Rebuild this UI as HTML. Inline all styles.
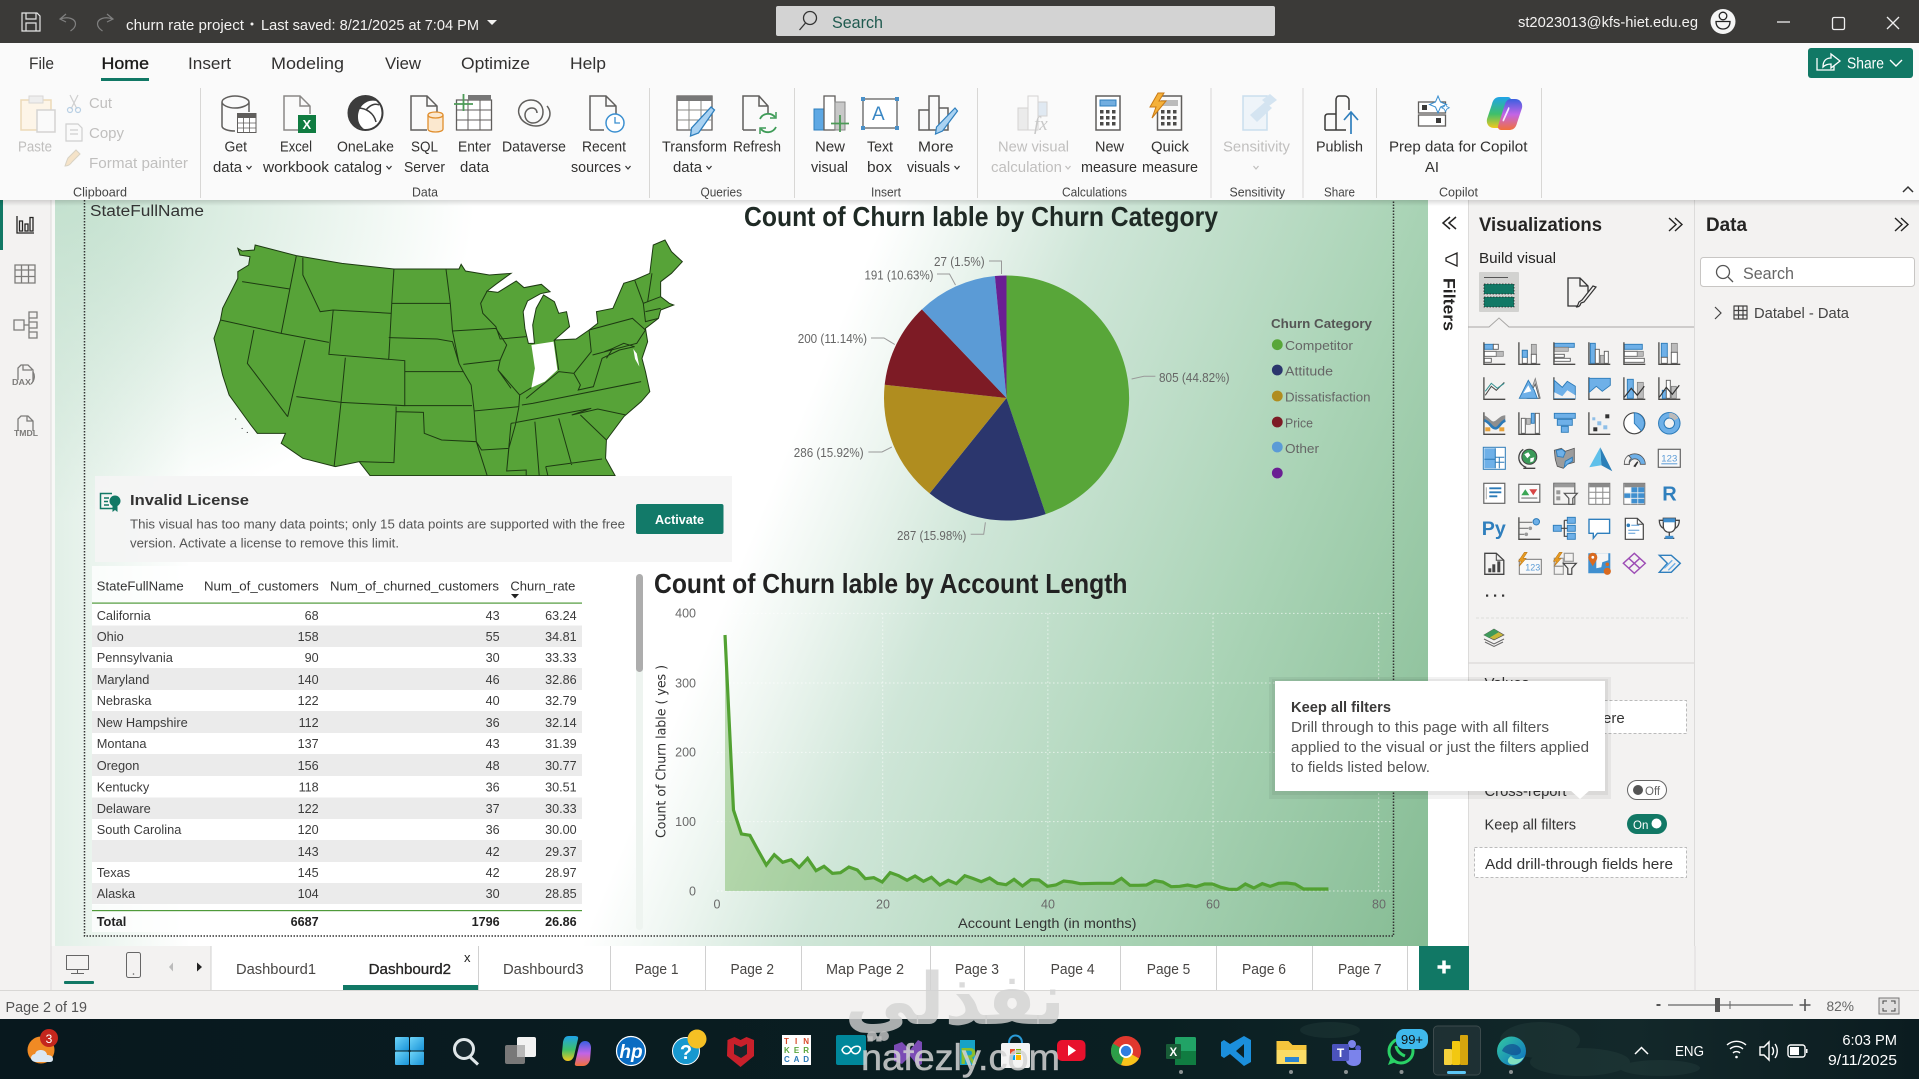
<!DOCTYPE html>
<html><head><meta charset="utf-8"><title>churn rate project</title>
<style>
html,body{margin:0;padding:0;width:1919px;height:1079px;overflow:hidden;background:#f3f2f1}
svg{display:block}
text{font-family:"Liberation Sans","DejaVu Sans",sans-serif;white-space:pre}
.r{font-size:14.5px;fill:#323130}
.d{font-size:14.5px;fill:#c0bfbe}
.gl{font-size:13px;fill:#444}
.tb{font-size:17px;fill:#323130}
.th{font-size:12.8px;fill:#333}
.c{font-size:12.8px;fill:#3c3c3c}
.n{font-size:12.6px;fill:#3c3c3c;text-anchor:end}
.nb{font-size:12.6px;fill:#222;text-anchor:end;font-weight:bold}
.pl{font-size:12.5px;fill:#666}
.ax{font-size:12.5px;fill:#6a6a6a}
.lg{font-size:13px;fill:#666}
.pg{font-size:14.5px;fill:#484644}
.k{fill:none;stroke:#4b4a48;stroke-width:1.3}
.b{fill:#6eb0e8;stroke:#2b7ab8;stroke-width:.9}
.g{fill:#bcbcbc;stroke:#7a7a7a;stroke-width:.7}
.w{fill:#fff;stroke:#5a5a5a;stroke-width:.9}
.s{fill:none;stroke:#605e5c;stroke-width:1.5}
.f{fill:none;stroke:#d4d3d2;stroke-width:1.5}
.st{fill:none;stroke:#1d3a12;stroke-width:1;vector-effect:non-scaling-stroke}
</style></head><body>
<svg width="1919" height="1079" viewBox="0 0 1919 1079" xmlns="http://www.w3.org/2000/svg">
<defs>
<linearGradient id="cv" gradientUnits="userSpaceOnUse" x1="870" y1="250" x2="1586" y2="547">
<stop offset="0" stop-color="#fff"/><stop offset=".1" stop-color="#eef6f1"/><stop offset=".26" stop-color="#cfe6d8"/><stop offset=".63" stop-color="#a9d3b5"/><stop offset="1" stop-color="#86bc94"/>
</linearGradient>
<radialGradient id="tl" gradientUnits="userSpaceOnUse" cx="55" cy="200" r="420" gradientTransform="translate(55 200) scale(1 .75) translate(-55 -200)">
<stop offset="0" stop-color="#b9dcc6" stop-opacity=".85"/><stop offset="1" stop-color="#b9dcc6" stop-opacity="0"/>
</radialGradient>
<linearGradient id="lf" gradientUnits="userSpaceOnUse" x1="55" y1="0" x2="190" y2="0">
<stop offset="0" stop-color="#c4e0cf" stop-opacity=".5"/><stop offset="1" stop-color="#c4e0cf" stop-opacity="0"/>
</linearGradient>
<linearGradient id="sh" x1="0" y1="0" x2="0" y2="1"><stop offset="0" stop-color="#000" stop-opacity=".14"/><stop offset="1" stop-color="#000" stop-opacity="0"/></linearGradient>
<linearGradient id="co1" x1="0" y1="0" x2="0" y2="1"><stop offset="0" stop-color="#1fa3e8"/><stop offset=".55" stop-color="#3fc06a"/><stop offset="1" stop-color="#f2c81e"/></linearGradient>
<linearGradient id="co2" x1="0" y1="0" x2="0" y2="1"><stop offset="0" stop-color="#3a5fe0"/><stop offset=".5" stop-color="#c364e6"/><stop offset="1" stop-color="#f2703a"/></linearGradient>
<linearGradient id="win" x1="0" y1="0" x2="1" y2="1"><stop offset="0" stop-color="#6ed4f8"/><stop offset="1" stop-color="#1893d8"/></linearGradient>
<linearGradient id="edge" x1="0" y1="0" x2="1" y2="1"><stop offset="0" stop-color="#33c9a0"/><stop offset="1" stop-color="#0d6dc4"/></linearGradient>
<linearGradient id="tbg" x1="0" y1="0" x2="1" y2="0"><stop offset="0" stop-color="#08181e"/><stop offset=".6" stop-color="#0a1f22"/><stop offset=".85" stop-color="#13282a"/><stop offset="1" stop-color="#0b1c20"/></linearGradient>
</defs>

<!-- base -->
<rect width="1919" height="1079" fill="#f3f2f1"/>

<!-- canvas -->
<rect x="55" y="200" width="1373" height="746" fill="url(#cv)"/>
<rect x="55" y="200" width="500" height="400" fill="url(#tl)"/>
<rect x="55" y="200" width="140" height="746" fill="url(#lf)"/>
<rect x="1428" y="200" width="41" height="746" fill="#fff"/>
<!-- left rail -->
<rect x="0" y="200" width="51" height="746" fill="#f3f2f1"/>
<rect x="51" y="200" width="4" height="746" fill="#f8f8f7"/>
<rect x="50.5" y="200" width="1" height="790" fill="#dcdbda"/>
<rect x="0" y="200" width="3" height="50" fill="#117865"/>
<g fill="none" stroke="#252423" stroke-width="1.3"><path d="M17 216v17h17"/><path d="M19.5 221h3v10h-3zM25 224h3v7h-3zM30 217.5h3v13.5h-3z"/></g>
<g fill="none" stroke="#7d7c7a" stroke-width="1.3"><path d="M15 265h20v18H15zM15 270h20M15 276.5h20M21.5 265v18M28.5 265v18"/>
<path d="M14 320h10v10H14zM24 325h5M29 315v20M29 312h8v6h-8zM29 322h8v6h-8zM29 332h8v6h-8z"/>
<path d="M18 380v-12l3-3h7l5 5v12M23 365v5h9"/><path d="M33 372c2 3 2 8-2 12"/>
<path d="M18 431v-12l3-3h7l5 5v10M27 416v5h6"/></g>
<text x="12" y="385" font-size="8.5" fill="#7d7c7a" font-weight="bold" textLength="19" lengthAdjust="spacingAndGlyphs">DAX</text>
<text x="14" y="436" font-size="8.5" fill="#7d7c7a" font-weight="bold" textLength="24" lengthAdjust="spacingAndGlyphs">TMDL</text>

<!-- frame -->
<path d="M84.5 200V936H1393.5V200" fill="none" stroke="#333" stroke-width="1.5" stroke-dasharray="1.5 1.5"/>

<!-- Map -->
<text x="90" y="216" font-size="15.5" fill="#333" textLength="114" lengthAdjust="spacingAndGlyphs">StateFullName</text>
<svg x="60" y="195" width="680" height="380" viewBox="0 0 1568 1140" preserveAspectRatio="none">
<path class="st" style="fill:#57a338" d="M410 160L420 168L448 165L450 150L545 182L650 205L770 222L920 222L925 208L935 228L990 240L1040 235L1005 268L985 288L1010 292L1052 258L1070 278L1110 268L1130 290L1108 296L1078 318L1068 350L1072 400L1080 445L1094 445L1090 390L1098 340L1115 300L1140 320L1150 355L1168 350L1175 395L1140 435L1190 432L1220 405L1240 385L1237 350L1275 340L1300 265L1325 255L1360 235L1368 150L1395 135L1410 170L1435 200L1410 235L1385 260L1385 305L1405 325L1415 330L1385 345L1380 370L1350 400L1355 440L1342 490L1350 530L1360 590L1340 620L1300 665L1260 735L1258 790L1280 842L715 842L690 800L635 815L560 790L510 745L520 715L455 715L440 690L390 600L375 540L355 430L370 375L375 340L410 250L410 230L435 210L438 185L415 180Z"/>
<path fill="#fff" d="M1087 450L1138 440L1147 525L1118 560L1087 578L1095 520Z"/>
<path fill="#fff" d="M1322 462L1330 476L1336 515L1326 492Z"/>
<path class="st" d="M420 260L530 282M545 182L530 282L510 415M560 188L560 240L600 350L630 345M370 375L510 415L620 442M447 405L432 505L525 665M565 435L525 665M630 345L620 478L758 493M658 488L648 622L545 605M630 345L765 355M770 222L765 325L758 493L795 497L795 632L648 622M758 428L870 432L905 440L920 505L930 530L795 530M765 325L900 325M890 222L900 325L905 408L920 505M905 408L1005 400M985 288L970 325L975 355L1005 395L1015 432L1075 425M1005 400L1030 450L1015 495L930 508M1015 495L1010 525L1060 600L1058 635L955 648L948 570L930 530M795 632L950 632M775 650L838 652L840 715L880 735L960 740L955 648M775 650L770 803L690 800M648 622L632 815M775 635L775 650M1058 637L1050 690L1035 760L972 765L960 740L985 842M1035 760L1030 828L1075 825L1075 842M1040 685L1225 640L1180 660L1240 642L1305 660M1065 630L1090 625L1340 560M1075 610L1150 530L1185 535L1225 470L1220 405M1140 435L1150 525M1087 578L1060 600M1185 535L1200 570L1195 585L1230 575L1250 490L1290 465L1325 455M1220 405L1320 370L1350 405L1330 445L1228 480M1095 680L1105 842M1150 670L1180 810M1120 815L1250 792M1120 815L1125 842M1200 660L1260 735M1325 255L1345 325L1385 305M1365 235L1355 320M1345 325L1350 380L1380 370M1350 350L1385 340M1275 460L1300 445L1325 455M1255 470L1275 460L1260 490M1040 685L1030 828M1010 525L1040 580"/>
<g fill="#222"><circle cx="405" cy="672" r="1.5"/><circle cx="420" cy="700" r="1.5"/><circle cx="432" cy="712" r="1.5"/></g>
<path fill="#ebebe8" d="M410 843L470 860L500 960L480 1000L440 960Z M730 843L1280 843L1310 940L1285 1000L1240 930L1000 930L900 1060L780 950Z" opacity=".45"/>
</svg>
<!-- license -->
<rect x="95" y="476" width="637" height="86" fill="#f4f4f4" fill-opacity=".92"/>
<g fill="none" stroke="#117865" stroke-width="1.5"><path d="M112 493.5H100.500v15H113"/><path d="M104 498h5M104 501.5h4M104 505h5"/></g>
<circle cx="115" cy="501" r="5.5" fill="#117865"/><path d="M112.5 506v6l2.5-2 2.5 2v-6z" fill="#117865"/>
<text x="130" y="505" font-size="15" font-weight="bold" fill="#333" textLength="119" lengthAdjust="spacingAndGlyphs">Invalid License</text>
<text x="130" y="528.5" font-size="13" fill="#555" textLength="495" lengthAdjust="spacingAndGlyphs">This visual has too many data points; only 15 data points are supported with the free</text>
<text x="130" y="547.5" font-size="13" fill="#555" textLength="269" lengthAdjust="spacingAndGlyphs">version. Activate a license to remove this limit.</text>
<rect x="636" y="504" width="87.5" height="30" rx="2" fill="#127a69"/>
<text x="655" y="524" font-size="13" font-weight="bold" fill="#fff" textLength="49" lengthAdjust="spacingAndGlyphs">Activate</text>

<!-- Pie chart -->
<text x="744" y="226" font-size="28" font-weight="bold" fill="#1f2a25" textLength="474" lengthAdjust="spacingAndGlyphs">Count of Churn lable by Churn Category</text>
<path d="M1006.5 398V275.5A122.5 122.5 0 0 1 1045.7 514.1Z" fill="#58a639"/>
<path d="M1006.5 398L1045.7 514.1A122.5 122.5 0 0 1 929.6 493.4Z" fill="#2b366d"/>
<path d="M1006.5 398L929.6 493.4A122.5 122.5 0 0 1 884.7 384.8Z" fill="#b08d1f"/>
<path d="M1006.5 398L884.7 384.8A122.5 122.5 0 0 1 921.9 309.4Z" fill="#7d1b25"/>
<path d="M1006.5 398L921.9 309.4A122.5 122.5 0 0 1 994.9 276Z" fill="#5b9bd6"/>
<path d="M1006.5 398L994.9 276A122.5 122.5 0 0 1 1006.5 275.5Z" fill="#6a1f93"/>
<g fill="none" stroke="#999" stroke-width="1"><path d="M989 261h12.5v13M937 274h12.5l6 11M871 338h13l10.8 6.5M868.4 452h13.6l9.8-5M970.7 534.3h13l1.7-12M1131.6 379l12.4-2.7h11.4"/></g>
<text class="pl" x="934" y="266" textLength="50.6" lengthAdjust="spacingAndGlyphs">27 (1.5%)</text>
<text class="pl" x="864.5" y="279.5" textLength="69" lengthAdjust="spacingAndGlyphs">191 (10.63%)</text>
<text class="pl" x="797.7" y="343" textLength="69.3" lengthAdjust="spacingAndGlyphs">200 (11.14%)</text>
<text class="pl" x="793.8" y="457" textLength="69.8" lengthAdjust="spacingAndGlyphs">286 (15.92%)</text>
<text class="pl" x="897" y="540" textLength="69.4" lengthAdjust="spacingAndGlyphs">287 (15.98%)</text>
<text class="pl" x="1159" y="382" textLength="70.6" lengthAdjust="spacingAndGlyphs">805 (44.82%)</text>
<text x="1271" y="328" font-size="13" font-weight="bold" fill="#555" textLength="101" lengthAdjust="spacingAndGlyphs">Churn Category</text>
<circle cx="1277.3" cy="344.7" r="5.4" fill="#58a639"/><circle cx="1277.3" cy="370" r="5.4" fill="#2b366d"/><circle cx="1277.3" cy="396" r="5.4" fill="#b08d1f"/><circle cx="1277.3" cy="422" r="5.4" fill="#7d1b25"/><circle cx="1277.3" cy="447" r="5.4" fill="#5b9bd6"/><circle cx="1277.3" cy="473" r="5.4" fill="#6a1f93"/>
<text class="lg" x="1285" y="350" textLength="68" lengthAdjust="spacingAndGlyphs">Competitor</text>
<text class="lg" x="1285" y="375.5" textLength="48" lengthAdjust="spacingAndGlyphs">Attitude</text>
<text class="lg" x="1285" y="401.5" textLength="85.5" lengthAdjust="spacingAndGlyphs">Dissatisfaction</text>
<text class="lg" x="1285" y="427.5" textLength="28" lengthAdjust="spacingAndGlyphs">Price</text>
<text class="lg" x="1285" y="453" textLength="34" lengthAdjust="spacingAndGlyphs">Other</text>

<!-- Table -->
<rect x="92" y="566" width="490" height="366" fill="#fff" fill-opacity=".75"/>
<rect x="92" y="603.5" width="490" height="301" fill="#fff"/>
<g fill="#ebebeb"><rect x="92" y="625.5" width="490" height="21.5"/><rect x="92" y="668" width="490" height="22"/><rect x="92" y="711" width="490" height="22"/><rect x="92" y="754" width="490" height="22"/><rect x="92" y="797.5" width="490" height="21.5"/><rect x="92" y="840" width="490" height="22"/><rect x="92" y="883" width="490" height="21"/></g>
<text class="th" x="96.7" y="590.5" textLength="87" lengthAdjust="spacingAndGlyphs">StateFullName</text>
<text class="th" x="204" y="590.5" textLength="114.7" lengthAdjust="spacingAndGlyphs">Num_of_customers</text>
<text class="th" x="330" y="590.5" textLength="169" lengthAdjust="spacingAndGlyphs">Num_of_churned_customers</text>
<text class="th" x="510.4" y="590.5" textLength="65" lengthAdjust="spacingAndGlyphs">Churn_rate</text>
<path d="M511 594h8l-4 4.5z" fill="#222"/>
<rect x="92" y="602.5" width="490" height="1.2" fill="#4f9a3a"/>
<rect x="92" y="910" width="490" height="1.2" fill="#4f9a3a"/>
<g>
<text class="c" x="96.7" y="620">California</text><text class="n" x="318.7" y="620">68</text><text class="n" x="499.7" y="620">43</text><text class="n" x="576.6" y="620">63.24</text>
<text class="c" x="96.7" y="641">Ohio</text><text class="n" x="318.7" y="641">158</text><text class="n" x="499.7" y="641">55</text><text class="n" x="576.6" y="641">34.81</text>
<text class="c" x="96.7" y="662">Pennsylvania</text><text class="n" x="318.7" y="662">90</text><text class="n" x="499.7" y="662">30</text><text class="n" x="576.6" y="662">33.33</text>
<text class="c" x="96.7" y="684">Maryland</text><text class="n" x="318.7" y="684">140</text><text class="n" x="499.7" y="684">46</text><text class="n" x="576.6" y="684">32.86</text>
<text class="c" x="96.7" y="705">Nebraska</text><text class="n" x="318.7" y="705">122</text><text class="n" x="499.7" y="705">40</text><text class="n" x="576.6" y="705">32.79</text>
<text class="c" x="96.7" y="727">New Hampshire</text><text class="n" x="318.7" y="727">112</text><text class="n" x="499.7" y="727">36</text><text class="n" x="576.6" y="727">32.14</text>
<text class="c" x="96.7" y="748">Montana</text><text class="n" x="318.7" y="748">137</text><text class="n" x="499.7" y="748">43</text><text class="n" x="576.6" y="748">31.39</text>
<text class="c" x="96.7" y="770">Oregon</text><text class="n" x="318.7" y="770">156</text><text class="n" x="499.7" y="770">48</text><text class="n" x="576.6" y="770">30.77</text>
<text class="c" x="96.7" y="791.5">Kentucky</text><text class="n" x="318.7" y="791.5">118</text><text class="n" x="499.7" y="791.5">36</text><text class="n" x="576.6" y="791.5">30.51</text>
<text class="c" x="96.7" y="813">Delaware</text><text class="n" x="318.7" y="813">122</text><text class="n" x="499.7" y="813">37</text><text class="n" x="576.6" y="813">30.33</text>
<text class="c" x="96.7" y="834">South Carolina</text><text class="n" x="318.7" y="834">120</text><text class="n" x="499.7" y="834">36</text><text class="n" x="576.6" y="834">30.00</text>
<text class="n" x="318.7" y="856">143</text><text class="n" x="499.7" y="856">42</text><text class="n" x="576.6" y="856">29.37</text>
<text class="c" x="96.7" y="877">Texas</text><text class="n" x="318.7" y="877">145</text><text class="n" x="499.7" y="877">42</text><text class="n" x="576.6" y="877">28.97</text>
<text class="c" x="96.7" y="898">Alaska</text><text class="n" x="318.7" y="898">104</text><text class="n" x="499.7" y="898">30</text><text class="n" x="576.6" y="898">28.85</text>
<text x="96.7" y="926" font-size="12.8" font-weight="bold" fill="#222">Total</text><text class="nb" x="318.7" y="926">6687</text><text class="nb" x="499.7" y="926">1796</text><text class="nb" x="576.6" y="926">26.86</text>
</g>
<rect x="636" y="574" width="7" height="356" rx="3.5" fill="#eef4f0"/>
<rect x="636" y="574" width="7" height="98" rx="3.5" fill="#adadad"/>

<!-- Line chart -->
<text x="654" y="593" font-size="28" font-weight="bold" fill="#222" textLength="473.5" lengthAdjust="spacingAndGlyphs">Count of Churn lable by Account Length</text>
<svg x="630" y="560" width="780" height="380" viewBox="0 0 1568 1140" preserveAspectRatio="none">
<g fill="none" stroke="#fff" stroke-opacity=".65" stroke-width="1" stroke-dasharray="1.5 2.5"><path vector-effect="non-scaling-stroke" d="M175 160H1530M175 369H1530M175 577H1530M175 785H1530M175 993H1530M508 160V993M840 160V993M1172 160V993M1505 160V993"/></g>
<path fill="#57a338" fill-opacity=".36" d="M191 225L208 750L224 822L241 826L257 870L274 915L290 884L307 907L324 899L340 922L357 895L374 932L390 919L407 940L423 938L440 921L457 930L473 956L490 953L507 966L523 938L540 947L557 961L573 948L590 964L606 952L623 975L640 961L656 971L673 947L689 955L706 965L723 954L739 970L756 974L772 958L789 978L806 959L822 960L839 979L856 975L872 963L889 966L905 971L939 970L972 970L988 955L1005 976L1022 976L1038 975L1055 962L1071 966L1088 980L1105 979L1121 975L1138 980L1155 972L1171 972L1188 982L1204 988L1221 988L1237 972L1254 984L1271 971L1287 979L1304 970L1320 969L1337 972L1354 987L1404 987L1404 993L191 993Z"/>
<path fill="none" stroke="#52a132" stroke-width="3.2" vector-effect="non-scaling-stroke" d="M191 225L208 750L224 822L241 826L257 870L274 915L290 884L307 907L324 899L340 922L357 895L374 932L390 919L407 940L423 938L440 921L457 930L473 956L490 953L507 966L523 938L540 947L557 961L573 948L590 964L606 952L623 975L640 961L656 971L673 947L689 955L706 965L723 954L739 970L756 974L772 958L789 978L806 959L822 960L839 979L856 975L872 963L889 966L905 971L939 970L972 970L988 955L1005 976L1022 976L1038 975L1055 962L1071 966L1088 980L1105 979L1121 975L1138 980L1155 972L1171 972L1188 982L1204 988L1221 988L1237 972L1254 984L1271 971L1287 979L1304 970L1320 969L1337 972L1354 987L1404 987"/>
</svg>
<text class="ax" x="696" y="617.5" text-anchor="end">400</text><text class="ax" x="696" y="687.5" text-anchor="end">300</text><text class="ax" x="696" y="756.5" text-anchor="end">200</text><text class="ax" x="696" y="826" text-anchor="end">100</text><text class="ax" x="696" y="895.5" text-anchor="end">0</text>
<text class="ax" x="717" y="908.5" text-anchor="middle">0</text><text class="ax" x="883" y="908.5" text-anchor="middle">20</text><text class="ax" x="1048" y="908.5" text-anchor="middle">40</text><text class="ax" x="1213" y="908.5" text-anchor="middle">60</text><text class="ax" x="1379" y="908.5" text-anchor="middle">80</text>
<text x="958" y="928" font-size="13.5" fill="#333" textLength="178.5" lengthAdjust="spacingAndGlyphs">Account Length (in months)</text>
<text transform="translate(665.5 838) rotate(-90)" font-size="13" fill="#333" textLength="173" lengthAdjust="spacingAndGlyphs" style="font-family:'DejaVu Sans',sans-serif">Count of Churn lable ( yes )</text>

<!-- Filters pane -->
<path d="M1450 217l-7 6 7 6M1456 217l-7 6 7 6" fill="none" stroke="#252423" stroke-width="1.5"/>
<path d="M1457 253v13l-11-5v-3z" fill="none" stroke="#252423" stroke-width="1.3"/>
<text transform="translate(1443.5 278) rotate(90)" font-size="17" font-weight="bold" fill="#252423" textLength="53" lengthAdjust="spacingAndGlyphs">Filters</text>
<rect x="1468" y="200" width="1" height="746" fill="#dcdbda"/>
<!-- Viz pane -->
<rect x="1469" y="200" width="225" height="746" fill="#f3f2f1"/>
<rect x="1694" y="200" width="1" height="790" fill="#dcdbda"/>
<text x="1479" y="231" font-size="19" font-weight="bold" fill="#252423" textLength="123" lengthAdjust="spacingAndGlyphs">Visualizations</text>
<path d="M1669 218l7 6.5-7 6.5M1675 218l7 6.5-7 6.5" fill="none" stroke="#252423" stroke-width="1.4"/>
<text x="1479" y="263" font-size="14.5" fill="#252423" textLength="77" lengthAdjust="spacingAndGlyphs" style="font-weight:500">Build visual</text>
<rect x="1479" y="272" width="40" height="40" rx="1" fill="#d2d2d0"/>
<rect x="1484" y="277" width="24" height="1" fill="#555"/>
<rect x="1484" y="284" width="30" height="10" fill="#117865"/><rect x="1484" y="297" width="30" height="10" fill="#117865"/>
<rect x="1484" y="284" width="30" height="10" fill="none" stroke="#222" stroke-width=".8" stroke-dasharray="1.5 1.5"/><rect x="1484" y="297" width="30" height="10" fill="none" stroke="#222" stroke-width=".8" stroke-dasharray="1.5 1.5"/>
<path d="M1578 306h-10v-28h12l8 8v6M1580 278v8h8" fill="none" stroke="#333" stroke-width="1.3"/>
<path d="M1596 287l-12 15-3 1c-1 3-2 4-5 4 2-1 2-3 3-5l3-2 11-14z" fill="none" stroke="#333" stroke-width="1.2"/>
<path d="M1468 327H1489L1499 318L1509 327H1694" fill="none" stroke="#a8a7a5" stroke-width="1"/>

<!-- viz icons -->
<g transform="translate(1483.3 342.3)"><rect class="b" x="1" y="2" width="9" height="5"/><rect class="w" x="10" y="2" width="5" height="5"/><rect class="w" x="1" y="9" width="12" height="5"/><rect class="g" x="13" y="9" width="7" height="5"/><rect class="w" x="1" y="16" width="7" height="4"/><path class="k" d="M.6 0V22H22"/></g>
<g transform="translate(1518.3 342.3)"><rect class="w" x="4" y="8" width="5" height="13"/><rect class="b" x="4" y="8" width="5" height="7"/><rect class="g" x="13" y="2" width="5" height="10"/><rect class="w" x="13" y="12" width="5" height="9"/><path class="k" d="M.6 0V22H22"/></g>
<g transform="translate(1553.3 342.3)"><rect class="b" x="1" y="1" width="20" height="4"/><rect class="g" x="1" y="5" width="14" height="4"/><rect class="w" x="1" y="12" width="10" height="3"/><rect class="w" x="1" y="16" width="16" height="3"/><path class="k" d="M.6 0V22H22"/></g>
<g transform="translate(1588.3 342.3)"><rect class="b" x="2" y="1" width="5" height="20"/><rect class="w" x="7" y="7" width="4" height="14"/><rect class="g" x="12" y="13" width="4" height="8"/><rect class="w" x="16" y="9" width="4" height="12"/><path class="k" d="M.6 0V22H22"/></g>
<g transform="translate(1623.3 342.3)"><rect class="b" x="1" y="2" width="18" height="5"/><rect class="w" x="1" y="9" width="13" height="5"/><rect class="g" x="14" y="9" width="6" height="5"/><rect class="w" x="1" y="16" width="20" height="4"/><path class="k" d="M.6 0V22H22"/></g>
<g transform="translate(1658.3 342.3)"><rect class="b" x="3" y="1" width="6" height="14"/><rect class="w" x="3" y="15" width="6" height="6"/><rect class="g" x="13" y="1" width="6" height="9"/><rect class="w" x="13" y="10" width="6" height="11"/><path class="k" d="M.6 0V22H22"/></g>

<g transform="translate(1483.3 377.3)"><path class="k" d="M.6 0V22H22"/><path d="M2 18L8 9l5 4 8-8" fill="none" stroke="#4b4a48" stroke-width="1"/><path d="M2 14L8 6l6 5 7-5" fill="none" stroke="#2f8f8f" stroke-width="1"/></g>
<g transform="translate(1518.3 377.3)"><path class="g" d="M10 21L17 1l5 20z"/><path class="w" d="M9 21L17 7l4 14z"/><path class="b" d="M1 21L10 3l6 10 3 8z"/><path d="M5 16l5-8 3 6z" fill="#fff"/></g>
<g transform="translate(1553.3 377.3)"><path class="k" d="M.6 0V22H22"/><path class="b" d="M1 3L9 10l5-6 8 5v12L1 21z"/><path d="M1 15l8 4 5-6 8 5v3H1z" fill="#f3f2f1"/></g>
<g transform="translate(1588.3 377.3)"><path class="k" d="M.6 0V22H22"/><path class="b" d="M1 1H22V8L14 14 8 9 1 15z"/></g>
<g transform="translate(1623.3 377.3)"><path class="k" d="M.6 0V22H22"/><rect class="b" x="4" y="2" width="6" height="19"/><rect class="g" x="14" y="5" width="6" height="16"/><path d="M1 20L8 11l6 7 7-9" fill="none" stroke="#333" stroke-width="1.2"/></g>
<g transform="translate(1658.3 377.3)"><path class="k" d="M.6 0V22H22"/><rect class="b" x="4" y="13" width="4" height="8"/><rect class="w" x="8" y="3" width="4" height="18"/><rect class="g" x="13" y="9" width="5" height="12"/><path d="M1 20L8 10l6 7 7-9" fill="none" stroke="#333" stroke-width="1.2"/></g>

<g transform="translate(1483.3 412.3)"><path class="k" d="M.6 0V22H22"/><path d="M1 3C7 6 8 10 11 9S17 3 22 3V10C17 11 13 16 10 15S6 10 1 9z" fill="#8e8e8e"/><path d="M1 8C7 10 8 16 12 16S17 10 22 8" fill="none" stroke="#2b7ab8" stroke-width="2.6"/><rect x="2" y="15" width="5" height="4" fill="#e6a13a"/><rect x="16" y="15" width="5" height="4" fill="#e6a13a"/></g>
<g transform="translate(1518.3 412.3)"><path class="k" d="M.6 0V22H22"/><rect class="w" x="3" y="6" width="4" height="15"/><rect class="g" x="8" y="6" width="4" height="6"/><rect class="b" x="13" y="1" width="3" height="10"/><rect class="w" x="17" y="1" width="4" height="20"/></g>
<g transform="translate(1553.3 412.3)"><path class="b" d="M1 1H22V6H1zM4 7H19V13H4zM8 14H15V20H8z"/></g>
<g transform="translate(1588.3 412.3)"><path class="k" d="M.6 0V22H22"/><rect x="4" y="5" width="3" height="3" fill="#8fbfe8"/><rect x="9" y="9" width="4" height="4" fill="#8fbfe8"/><rect x="17" y="2" width="4" height="4" fill="#333"/><rect x="5" y="15" width="4" height="4" fill="#333"/><rect x="15" y="13" width="4" height="4" fill="#8fbfe8"/></g>
<g transform="translate(1623.3 412.3)"><circle cx="11" cy="11" r="10.5" fill="#fff" stroke="#444" stroke-width="1.2"/><path class="b" d="M11 .5A10.5 10.5 0 0 1 18 18.5L11 11z"/></g>
<g transform="translate(1658.3 412.3)"><circle cx="11" cy="11" r="8" fill="none" stroke="#2b7ab8" stroke-width="6.5"/><circle cx="11" cy="11" r="8" fill="none" stroke="#6eb0e8" stroke-width="4.5"/><path d="M11 3a8 8 0 0 1 7 4" fill="none" stroke="#bbb" stroke-width="5"/></g>

<g transform="translate(1483.3 447.3)"><rect x="0" y="0" width="22" height="22" fill="#fff" stroke="#2b7ab8"/><rect x="1" y="1" width="11" height="11" fill="#6eb0e8"/><rect x="1" y="12" width="11" height="9" fill="#6eb0e8"/><path d="M1 12H12M12 1V21M12 10H21M16 10V21M12 15H21" stroke="#2b7ab8" fill="none"/></g>
<g transform="translate(1518.3 447.3)"><circle cx="11" cy="9.5" r="7.5" fill="#3a9a58" stroke="#444"/><path d="M6 7l4-2 2 3-3 3zM12 11l4-1-1 4-3 1z" fill="#fff"/><path d="M5 2a10 10 0 0 0 3 18M5 21H17" fill="none" stroke="#444" stroke-width="1.3"/></g>
<g transform="translate(1553.3 447.3)"><path d="M1 3L8 1l4 3 9-3v14l-7 2-4 4-6-2-2-7z" fill="#9c9c9c" stroke="#555" stroke-width=".8"/><path class="b" d="M3 3l6-1 3 3-2 5-6-1zM12 14l7-4v4l-5 3-3 3z"/></g>
<g transform="translate(1588.3 447.3)"><path d="M12 0L24 24 13 18z" fill="#2b7fb8"/><path d="M12 0L1 20 13 18z" fill="#5fc0ea"/></g>
<g transform="translate(1623.3 447.3)"><path d="M1 17A10.5 10.5 0 0 1 22 17H17A5.5 5.5 0 0 0 6 17z" fill="#6eb0e8" stroke="#555" stroke-width=".8"/><path d="M1 17A10.5 10.5 0 0 1 5 8l3 3A6 6 0 0 0 6 17z" fill="#f3f2f1" stroke="#555" stroke-width=".8"/><path d="M10 19l4-5 1 1-3 5z" fill="#333"/></g>
<g transform="translate(1658.3 447.3)"><rect x="0" y="2" width="22" height="18" fill="#f9f9f9" stroke="#666" stroke-width="1.2"/><text x="3" y="14" font-size="9" fill="#5a9bd6" textLength="16" lengthAdjust="spacingAndGlyphs">123</text><rect x="3" y="16" width="16" height="1" fill="#5a9bd6"/></g>

<g transform="translate(1483.3 482.3)"><rect x=".5" y="1" width="21" height="20" fill="#fff" stroke="#666" stroke-width="1.2"/><path d="M6 6H18M6 10H18M6 14H14" stroke="#2b7ab8" stroke-width="1.8"/><path d="M3 5V17" stroke="#aaa"/></g>
<g transform="translate(1518.3 482.3)"><rect x=".5" y="2" width="21" height="18" fill="#fbfbfb" stroke="#666" stroke-width="1.2"/><path d="M3 13l4-6 4 6z" fill="#3aa655"/><path d="M11 7h8l-4 6z" fill="#d84545"/><rect x="3" y="15" width="16" height="1.5" fill="#999"/></g>
<g transform="translate(1553.3 482.3)"><rect x=".5" y="1" width="21" height="21" fill="none" stroke="#666" stroke-width="1.2"/><rect x="1" y="1" width="20" height="4" fill="#999"/><rect x="3" y="8" width="4" height="4" fill="#999"/><rect x="3" y="14" width="4" height="4" fill="#999"/><path d="M11 11H24L19.5 16V22H15.5V16z" fill="#f3f2f1" stroke="#555" stroke-width="1.2"/></g>
<g transform="translate(1588.3 482.3)"><rect x=".5" y="1" width="21" height="21" fill="#fff" stroke="#777" stroke-width="1"/><rect x="1" y="1" width="20" height="4" fill="#8a8a8a"/><path d="M1 10H21M1 16H21M7.5 5V22M14.5 5V22" stroke="#8a8a8a"/></g>
<g transform="translate(1623.3 482.3)"><rect x=".5" y="1" width="21" height="21" fill="#fff" stroke="#777"/><rect x="1" y="1" width="20" height="4" fill="#8a8a8a"/><rect x="8" y="5" width="13" height="16" fill="#3f8fcf"/><rect x="1" y="11" width="20" height="5" fill="#3f8fcf"/><path d="M1 10.5H21M1 16H21M7.5 5V22M14.5 5V22" stroke="#eee" stroke-width=".8"/></g>
<g transform="translate(1658.3 482.3)"><text x="4" y="18" font-size="20" font-weight="bold" fill="#2f7fbd">R</text></g>

<g transform="translate(1483.3 517.3)"><text x="-1.500" y="17.500" font-size="19.500" font-weight="bold" fill="#2f7fbd" textLength="24" lengthAdjust="spacingAndGlyphs">Py</text></g>
<g transform="translate(1518.3 517.3)"><path class="k" d="M.6 0V22H22"/><path d="M1 5H14M1 11H10M1 17H6" stroke="#777" stroke-width="1.2"/><circle cx="18" cy="4.5" r="3.2" fill="#6eb0e8" stroke="#2b7ab8"/><circle cx="12" cy="11" r="1.8" fill="#999"/><circle cx="8" cy="17" r="1.8" fill="#999"/></g>
<g transform="translate(1553.3 517.3)"><rect class="b" x="0" y="8" width="8" height="6"/><rect class="b" x="14" y="0" width="8" height="6"/><rect class="b" x="14" y="8" width="8" height="6"/><rect class="b" x="14" y="16" width="8" height="6"/><path d="M8 11H14M11 3V19H14M11 3H14" fill="none" stroke="#444" stroke-width="1.2"/></g>
<g transform="translate(1588.3 517.3)"><path d="M.7 2H21.3V16H9L5 21V16H.7z" fill="#fff" stroke="#2f7fbd" stroke-width="1.4"/></g>
<g transform="translate(1623.3 517.3)"><path d="M2 20V1H14L20 7V22H2z" fill="#fff" stroke="#444" stroke-width="1.2"/><path d="M14 1V7H20" fill="none" stroke="#444"/><circle cx="5" cy="8" r="1.8" fill="#2f7fbd"/><path d="M8 8H16M5 13H16M5 16H12" stroke="#5a9bd6"/></g>
<g transform="translate(1658.3 517.3)"><path d="M5 1H17V9C17 13 14 15 11 15S5 13 5 9z" fill="#fff" stroke="#444" stroke-width="1.3"/><rect x="5" y="1" width="12" height="4" fill="#3f8fcf"/><path d="M5 3H1C1 8 3 10 5 11M17 3H21C21 8 19 10 17 11M11 15V19M6 21H16" fill="none" stroke="#444" stroke-width="1.3"/><rect x="7" y="18.5" width="8" height="3" fill="#3f8fcf"/></g>

<g transform="translate(1483.3 552.3)"><path d="M1.5 22V1H13L20.5 8V22z" fill="none" stroke="#444" stroke-width="1.3"/><path d="M13 1V8H20.5" fill="none" stroke="#444"/><rect x="5" y="16" width="3" height="4" fill="#444"/><rect x="9" y="12" width="3" height="8" fill="#444"/><rect x="14" y="9" width="3" height="11" fill="#444"/></g>
<g transform="translate(1518.3 552.3)"><rect x="1" y="7" width="22" height="15" fill="#f9f9f9" stroke="#777"/><text x="7" y="18" font-size="9" fill="#5a9bd6" textLength="15" lengthAdjust="spacingAndGlyphs">123</text><path d="M6 0L0 9H3L1 14 8 6H5L9 0z" fill="#e59a22" stroke="#b26d12" stroke-width=".5"/></g>
<g transform="translate(1553.3 552.3)"><rect x="1" y="6" width="9" height="8" fill="none" stroke="#999" stroke-width="1.2"/><rect x="1" y="14" width="9" height="8" fill="none" stroke="#999" stroke-width="1.2"/><rect x="11" y="1" width="9" height="8" fill="none" stroke="#999" stroke-width="1.2"/><path d="M10 11H23L18.5 16V22H14.5V16z" fill="#f3f2f1" stroke="#444" stroke-width="1.2"/><path d="M6 0L0 9H3L1 14 8 6H5L9 0z" fill="#e59a22" stroke="#b26d12" stroke-width=".5"/></g>
<g transform="translate(1588.3 552.3)"><path d="M0 1H22V21H0z" fill="#3f8fcf"/><path d="M8 1H20V8L14 10 13 15 8 16z" fill="#f5f5f5"/><path d="M0 5a4.5 4.5 0 0 1 9 0c0 3-3 6-4.5 9C3 11 0 8 0 5z" fill="#d96a20"/><circle cx="4.5" cy="5" r="1.4" fill="#fff"/><circle cx="19" cy="19" r="3.6" fill="#d96a20"/><circle cx="19" cy="12" r="1.8" fill="#d96a20"/></g>
<g transform="translate(1623.3 552.3)"><path d="M11 1L22 11 11 21 0 11z" fill="none" stroke="#9d4db5" stroke-width="1.4"/><path d="M5.5 6L16.5 16M16.5 6L5.5 16" stroke="#9d4db5" stroke-width="1.4"/></g>
<g transform="translate(1658.3 552.3)"><path d="M1 3H13L22 11 13 20H1L9 11z" fill="none" stroke="#2f7fbd" stroke-width="1.4"/><path d="M6 16L14 8M10 18L17 11" stroke="#6eb0e8" stroke-width="1.4"/></g>
<g fill="#333"><rect x="1486" y="594.5" width="2.2" height="2.2"/><rect x="1494" y="594.5" width="2.2" height="2.2"/><rect x="1502" y="594.5" width="2.2" height="2.2"/></g>
<path d="M1476 618H1688" stroke="#dedddb" stroke-dasharray="3 2"/>
<g transform="translate(0 -4)"><path d="M1484 639l10-6 10 6-10 5z" fill="#c8b73a" stroke="#555" stroke-width=".7"/><path d="M1484 639l10-6 5 3-10 6z" fill="#3f9a5a"/><path d="M1484 643l10 5 10-5M1485 646l9 4.5 9-4.5" fill="none" stroke="#666" stroke-width="1"/></g>
<rect x="1468" y="662.5" width="226" height="1" fill="#d4d3d1"/>
<text x="1484.5" y="688" font-size="15" fill="#333">Values</text>
<rect x="1474.5" y="700.5" width="212" height="33" fill="#fff" stroke="#bbb" stroke-dasharray="3 2"/>
<text x="1603" y="723" font-size="15" fill="#333">ere</text>
<text x="1484.5" y="796" font-size="15" fill="#333" textLength="82" lengthAdjust="spacingAndGlyphs">Cross-report</text>
<rect x="1627.5" y="780.5" width="39" height="19" rx="9.5" fill="#fff" stroke="#666"/><circle cx="1638" cy="790" r="5" fill="#555"/><text x="1645" y="795" font-size="11.5" fill="#666">Off</text>
<text x="1484.5" y="829.5" font-size="15" fill="#333" textLength="91.5" lengthAdjust="spacingAndGlyphs">Keep all filters</text>
<rect x="1627" y="814" width="40" height="20" rx="10" fill="#117865"/><text x="1633" y="829" font-size="11.5" fill="#fff">On</text><circle cx="1656.5" cy="823.5" r="5" fill="#fff"/>
<rect x="1474.5" y="847.5" width="212" height="30" fill="#fff" stroke="#bbb" stroke-dasharray="3 2"/>
<text x="1485" y="869" font-size="15" fill="#333" textLength="188" lengthAdjust="spacingAndGlyphs">Add drill-through fields here</text>

<!-- Data pane -->
<rect x="1695" y="200" width="224" height="790" fill="#f3f2f1"/>
<text x="1706" y="231" font-size="19" font-weight="bold" fill="#252423" textLength="41" lengthAdjust="spacingAndGlyphs">Data</text>
<path d="M1895 218l7 6.5-7 6.5M1901 218l7 6.5-7 6.5" fill="none" stroke="#252423" stroke-width="1.4"/>
<rect x="1700.5" y="257.5" width="214" height="29" rx="3" fill="#fff" stroke="#c8c6c4"/>
<circle cx="1723" cy="272" r="6.5" fill="none" stroke="#555" stroke-width="1.3"/><path d="M1728 277l5 5" stroke="#555" stroke-width="1.3"/>
<text x="1743" y="279" font-size="17" fill="#666" textLength="51" lengthAdjust="spacingAndGlyphs">Search</text>
<path d="M1715 307l6 6-6 6" fill="none" stroke="#444" stroke-width="1.2"/>
<path d="M1734 306h13v13h-13zM1734 310.5h13M1734 315h13M1738.5 306v13M1743 306v13" fill="none" stroke="#444" stroke-width="1.2" stroke-linejoin="round"/>
<text x="1754" y="318" font-size="14.5" fill="#444" textLength="95" lengthAdjust="spacingAndGlyphs">Databel - Data</text>

<!-- Tooltip -->
<g>
<rect x="1269" y="677" width="342" height="122" fill="#000" opacity=".05"/>
<rect x="1272" y="679" width="336" height="116" fill="#000" opacity=".05"/>
<path d="M1570 790l10 9 10-9z" fill="#fff"/>
<rect x="1275" y="681" width="330" height="110" fill="#fff"/>
<text x="1291" y="712" font-size="14.5" font-weight="bold" fill="#3b3a39" textLength="100" lengthAdjust="spacingAndGlyphs">Keep all filters</text>
<text x="1291" y="732" font-size="14.5" fill="#555" textLength="258" lengthAdjust="spacingAndGlyphs">Drill through to this page with all filters</text>
<text x="1291" y="752" font-size="14.5" fill="#555" textLength="298" lengthAdjust="spacingAndGlyphs">applied to the visual or just the filters applied</text>
<text x="1291" y="772" font-size="14.5" fill="#555" textLength="139" lengthAdjust="spacingAndGlyphs">to fields listed below.</text>
</g>

<!-- page tabs -->
<rect x="211" y="946" width="1258" height="44" fill="#fff"/>
<rect x="0" y="946" width="211" height="44" fill="#f3f2f1"/>
<rect x="1469" y="946" width="450" height="44" fill="#f3f2f1"/>
<rect x="1694.5" y="946" width="1" height="44" fill="#dcdbda"/>
<rect x="50.5" y="946" width="1" height="44" fill="#dcdbda"/>
<g fill="none" stroke="#666"><path d="M66.5 955.5h22v14h-22zM77.5 969.5v4M71 973.5h13"/><rect x="126.5" y="952.5" width="14" height="25" rx="2"/></g>
<circle cx="133.5" cy="974" r=".8" fill="#666"/>
<rect x="64" y="981" width="30" height="3" rx="1" fill="#117865"/>
<path d="M173 962.5v9l-4-4.5z" fill="#bbb"/><path d="M197 962.5v9l5-4.5z" fill="#222"/>
<g fill="#d0d0d0"><rect x="210.5" y="946" width="1" height="44"/><rect x="478" y="946" width="1" height="44"/><rect x="610" y="946" width="1" height="44"/><rect x="705" y="946" width="1" height="44"/><rect x="801" y="946" width="1" height="44"/><rect x="930" y="946" width="1" height="44"/><rect x="1024" y="946" width="1" height="44"/><rect x="1120" y="946" width="1" height="44"/><rect x="1216" y="946" width="1" height="44"/><rect x="1312" y="946" width="1" height="44"/><rect x="1407" y="946" width="1" height="44"/></g>
<rect x="343" y="985" width="135" height="5" fill="#117865"/>
<text class="pg" x="236" y="974" textLength="80" lengthAdjust="spacingAndGlyphs">Dashbourd1</text>
<text class="pg" x="368.6" y="974" textLength="82.5" lengthAdjust="spacingAndGlyphs" style="fill:#252423;font-weight:500;stroke:#252423;stroke-width:.3">Dashbourd2</text>
<text x="464" y="962" font-size="13" fill="#222">x</text>
<text class="pg" x="503" y="974" textLength="80.6" lengthAdjust="spacingAndGlyphs">Dashbourd3</text>
<text class="pg" x="635" y="974" textLength="43.5" lengthAdjust="spacingAndGlyphs">Page 1</text>
<text class="pg" x="730.5" y="974" textLength="43.5" lengthAdjust="spacingAndGlyphs">Page 2</text>
<text class="pg" x="826" y="974" textLength="78" lengthAdjust="spacingAndGlyphs">Map Page 2</text>
<text class="pg" x="955" y="974" textLength="44" lengthAdjust="spacingAndGlyphs">Page 3</text>
<text class="pg" x="1050.6" y="974" textLength="44" lengthAdjust="spacingAndGlyphs">Page 4</text>
<text class="pg" x="1146.8" y="974" textLength="43.5" lengthAdjust="spacingAndGlyphs">Page 5</text>
<text class="pg" x="1242" y="974" textLength="44" lengthAdjust="spacingAndGlyphs">Page 6</text>
<text class="pg" x="1338" y="974" textLength="43.5" lengthAdjust="spacingAndGlyphs">Page 7</text>
<rect x="1419" y="946" width="50" height="44" fill="#117865"/>
<path d="M1444 960.5v13M1437.5 967h13" stroke="#fff" stroke-width="3.5"/>

<!-- status bar -->
<rect x="0" y="990" width="1919" height="29" fill="#f3f2f1"/>
<rect x="0" y="990" width="1919" height="1" fill="#d8d7d5"/>
<text x="5.5" y="1012" font-size="14.5" fill="#555" textLength="81.5" lengthAdjust="spacingAndGlyphs">Page 2 of 19</text>
<path d="M1656.5 1005h4" stroke="#555" stroke-width="2"/>
<path d="M1668 1005h125" stroke="#666" stroke-width="1.2"/><rect x="1715" y="998" width="5" height="14" fill="#555"/><path d="M1730 1001v8" stroke="#666"/>
<path d="M1805 999v12M1799.5 1005h11" stroke="#555" stroke-width="1.6"/>
<text x="1826.5" y="1011" font-size="14" fill="#666" textLength="27.5" lengthAdjust="spacingAndGlyphs">82%</text>
<rect x="1879" y="998" width="20" height="16" fill="#e0dfde" stroke="#777"/>
<path d="M1883 1004v-3h4M1895 1004v-3h-4M1883 1008v3h4M1895 1008v3h-4" fill="none" stroke="#444"/>

<!-- Title bar -->
<rect x="0" y="0" width="1919" height="43" fill="#3b3a38"/>
<path d="M22 13h15l3 3v15H22zM26 13v6h10v-6M26 31v-8h10v8" fill="none" stroke="#e6e6e6" stroke-width="1.2"/>
<path d="M66 14l-6 5 6 3M60.5 19c8-3 15 0 15 5 0 3-2 5-5 7" fill="none" stroke="#808080" stroke-width="1.2"/>
<path d="M107 14l6 5-6 3M112.5 19c-8-3-15 0-15 5 0 3 2 5 5 7" fill="none" stroke="#808080" stroke-width="1.2"/>
<text x="126" y="30" font-size="15" fill="#f3f2f1" textLength="118" lengthAdjust="spacingAndGlyphs">churn rate project</text>
<circle cx="252" cy="24" r="1.5" fill="#f3f2f1"/>
<text x="261" y="30" font-size="15" fill="#f3f2f1" textLength="218" lengthAdjust="spacingAndGlyphs">Last saved: 8/21/2025 at 7:04 PM</text>
<path d="M487 20h10l-5 5z" fill="#f3f2f1"/>
<rect x="776" y="6" width="499" height="30" rx="2" fill="#d3d3d3"/>
<circle cx="810" cy="18" r="6.5" fill="none" stroke="#333" stroke-width="1.3"/><path d="M805.5 23l-6 7" stroke="#333" stroke-width="1.3"/>
<text x="832" y="28" font-size="17" fill="#1f5a4f" textLength="51" lengthAdjust="spacingAndGlyphs">Search</text>
<text x="1518" y="27" font-size="15" fill="#f3f2f1" textLength="180" lengthAdjust="spacingAndGlyphs">st2023013@kfs-hiet.edu.eg</text>
<circle cx="1723" cy="21.5" r="12.5" fill="#f5f5f5"/><circle cx="1723" cy="16" r="3.8" fill="none" stroke="#222" stroke-width="1.3"/><path d="M1716 21.5h14c0 5-3 7.5-7 7.5s-7-2.5-7-7.5z" fill="none" stroke="#222" stroke-width="1.3"/>
<path d="M1777 22h13" stroke="#eee" stroke-width="1.3"/><rect x="1832.5" y="17.5" width="12" height="12" rx="1.5" fill="none" stroke="#eee" stroke-width="1.3"/><path d="M1887 17l12 12M1899 17l-12 12" stroke="#eee" stroke-width="1.3"/>

<!-- Ribbon -->
<rect x="0" y="43" width="1919" height="157" fill="#fafafa"/>
<rect x="0" y="200" width="1919" height="6" fill="url(#sh)"/>
<text class="tb" x="29" y="69" textLength="25" lengthAdjust="spacingAndGlyphs">File</text>
<text class="tb" x="101.5" y="69" textLength="47.5" lengthAdjust="spacingAndGlyphs" style="fill:#1b1a19;stroke:#1b1a19;stroke-width:.35">Home</text>
<text class="tb" x="188" y="69" textLength="43" lengthAdjust="spacingAndGlyphs">Insert</text>
<text class="tb" x="271" y="69" textLength="73" lengthAdjust="spacingAndGlyphs">Modeling</text>
<text class="tb" x="385" y="69" textLength="36" lengthAdjust="spacingAndGlyphs">View</text>
<text class="tb" x="461" y="69" textLength="69" lengthAdjust="spacingAndGlyphs">Optimize</text>
<text class="tb" x="570" y="69" textLength="36" lengthAdjust="spacingAndGlyphs">Help</text>
<rect x="101" y="78" width="48" height="3" fill="#117865"/>
<rect x="1808" y="48" width="105" height="30" rx="3" fill="#117865"/>
<path d="M1817 58v12h17v-4M1823 67c0-6 3-9 8-9v-4l9 7-9 7v-4c-4 0-6 1-8 3z" fill="none" stroke="#fff" stroke-width="1.3"/>
<text x="1847" y="68.5" font-size="16" fill="#fff" textLength="37" lengthAdjust="spacingAndGlyphs">Share</text>
<path d="M1890 60l6 6 6-6" fill="none" stroke="#fff" stroke-width="1.4"/>

<g fill="#d8d7d5"><rect x="200" y="88" width="1" height="110"/><rect x="649" y="88" width="1" height="110"/><rect x="794" y="88" width="1" height="110"/><rect x="977" y="88" width="1" height="110"/><rect x="1210.5" y="88" width="1" height="110"/><rect x="1302.5" y="88" width="1" height="110"/><rect x="1376" y="88" width="1" height="110"/><rect x="1541" y="88" width="1" height="110"/></g>

<!-- Clipboard -->
<path d="M21 100h30v30H21z" fill="#fdf5e8" stroke="#ecd9b8" stroke-width="1.5"/><rect x="29" y="96" width="14" height="7" fill="#eee" stroke="#d8d7d5"/><rect x="37" y="110" width="18" height="22" fill="#fafafa" stroke="#d4d3d2" stroke-width="1.5"/>
<text class="d" x="18" y="151.5" textLength="34" lengthAdjust="spacingAndGlyphs">Paste</text>
<g fill="none" stroke="#cfcfcf" stroke-width="1.2"><path d="M70 95l7 14M78 95l-7 14"/><circle cx="70" cy="110" r="2.5" stroke="#b8cfe4"/><circle cx="78" cy="110" r="2.5" stroke="#b8cfe4"/><path d="M66 124h12l4 4v13H66z"/><path d="M70 130h8M70 134h8"/></g>
<path d="M68 158l8-8 4 4-8 8c-2 3-5 4-7 4 1-3 2-6 3-8z" fill="#f5e3c8" stroke="#d8d2c4"/>
<text class="d" x="89" y="108" textLength="23" lengthAdjust="spacingAndGlyphs">Cut</text>
<text class="d" x="89" y="138" textLength="35" lengthAdjust="spacingAndGlyphs">Copy</text>
<text class="d" x="89" y="168" textLength="99" lengthAdjust="spacingAndGlyphs">Format painter</text>
<text class="gl" x="73" y="196.5" textLength="54" lengthAdjust="spacingAndGlyphs">Clipboard</text>

<!-- Data group -->
<path class="s" d="M222 102v24c0 3 6 5 13 5M222 102c0-3 6-6 13-6s14 3 14 6v10M222 102c0 3 6 6 13 6s14-3 14-6"/>
<rect x="237.5" y="113.5" width="18.5" height="19" fill="#fff" stroke="#605e5c"/><rect x="237.5" y="113.5" width="18.5" height="4.5" fill="#605e5c"/><path d="M237.5 123h18.5M237.5 128h18.5M243.5 118v14.5M249.5 118v14.5" stroke="#605e5c" stroke-width=".8"/>
<path class="s" d="M298 130h-14V96h16l10 10v8M300 96v10h10" style="stroke:#8a8886"/><rect x="298" y="115" width="18" height="18" fill="#107c41"/><text x="302.5" y="129" font-size="13" font-weight="bold" fill="#fff">X</text>
<circle cx="365.5" cy="113" r="17" fill="#fff" stroke="#3c3c3c" stroke-width="2"/><path d="M349 113c0-9 6-17 15-17 5 0 9 1 12 5-9-2-18 5-18 16 0 5 2 9 6 12-9-1-15-8-15-16z" fill="#3c3c3c"/><path d="M358 108c8 0 16 5 18 14M366 110c4-5 9-7 13-5" fill="none" stroke="#3c3c3c" stroke-width="1.5"/>
<path class="s" d="M427 130h-16V96h16l10 10v6M427 96v10h10"/><path d="M428 115c0-4 15-4 15 0v14c0 4-15 4-15 0z" fill="#fbe8cf" stroke="#e08e2d" stroke-width="1.3"/><path d="M428 115c0 4 15 4 15 0" fill="none" stroke="#e08e2d" stroke-width="1.3"/>
<path d="M456.5 100h35v30h-35z" fill="#fff" stroke="#605e5c" stroke-width="1.3"/><rect x="468" y="95" width="23" height="5" fill="#777"/><path d="M456.5 110h35M456.5 120h35M468 100v30M480 100v30" stroke="#605e5c"/><path d="M454 104h19M463.5 94v17" stroke="#4d9a57" stroke-width="1.8"/>
<g fill="none" stroke="#605e5c" stroke-width="1.5"><path d="M521 118c-6-8 0-18 10-18 8 0 12 6 12 12 0 7-5 11-10 11-5 0-8-4-8-8s3-7 7-7c3 0 5 2 5 5"/><path d="M547 106c7 8 1 20-11 20-8 0-14-5-16-9"/></g>
<path class="s" d="M590 130V96h16l10 10v9M606 96v10h10M590 130h14"/><circle cx="615" cy="123" r="9" fill="#fff" stroke="#3a8fd0" stroke-width="1.5"/><path d="M615 117v6h5" fill="none" stroke="#3a8fd0" stroke-width="1.3"/>
<text class="r" x="224.5" y="151.5" textLength="22.5" lengthAdjust="spacingAndGlyphs">Get</text><text class="r" x="213" y="172" textLength="29" lengthAdjust="spacingAndGlyphs">data</text><path d="M246.5 166l2.5 3 2.5-3" fill="none" stroke="#333" stroke-width="1.2"/>
<text class="r" x="280" y="151.5" textLength="32" lengthAdjust="spacingAndGlyphs">Excel</text><text class="r" x="263" y="172" textLength="66" lengthAdjust="spacingAndGlyphs">workbook</text>
<text class="r" x="337" y="151.5" textLength="57" lengthAdjust="spacingAndGlyphs">OneLake</text><text class="r" x="334" y="172" textLength="48" lengthAdjust="spacingAndGlyphs">catalog</text><path d="M386.5 166l2.5 3 2.5-3" fill="none" stroke="#333" stroke-width="1.2"/>
<text class="r" x="411" y="151.5" textLength="27" lengthAdjust="spacingAndGlyphs">SQL</text><text class="r" x="404" y="172" textLength="41" lengthAdjust="spacingAndGlyphs">Server</text>
<text class="r" x="458" y="151.5" textLength="33" lengthAdjust="spacingAndGlyphs">Enter</text><text class="r" x="460" y="172" textLength="29" lengthAdjust="spacingAndGlyphs">data</text>
<text class="r" x="502" y="151.5" textLength="64" lengthAdjust="spacingAndGlyphs">Dataverse</text>
<text class="r" x="582" y="151.5" textLength="44" lengthAdjust="spacingAndGlyphs">Recent</text><text class="r" x="571" y="172" textLength="50" lengthAdjust="spacingAndGlyphs">sources</text><path d="M625.5 166l2.5 3 2.5-3" fill="none" stroke="#333" stroke-width="1.2"/>
<text class="gl" x="412" y="196.5" textLength="26" lengthAdjust="spacingAndGlyphs">Data</text>

<!-- Queries -->
<path d="M677 96h35v34h-35z" fill="#fff" stroke="#605e5c" stroke-width="1.3"/><rect x="677" y="96" width="35" height="5" fill="#777"/><path d="M677 110h35M677 120h35M689 101v29M701 101v29" stroke="#8a8886"/>
<path d="M711 107l3.5 3-16 23-8 3 1-8z" fill="#a9d2f2" stroke="#2f7fbd" stroke-width="1.3"/>
<path class="s" d="M743 130V96h16l9 10v7M759 96v10h9M743 130h13"/>
<path d="M760 119a9 9 0 0 1 15-2M776 127a9 9 0 0 1-15 2" fill="none" stroke="#3e9b57" stroke-width="1.8"/><path d="M776 112v6h-6M760 134v-6h6" fill="none" stroke="#3e9b57" stroke-width="1.5"/>
<text class="r" x="662" y="151.5" textLength="65" lengthAdjust="spacingAndGlyphs">Transform</text><text class="r" x="673" y="172" textLength="29" lengthAdjust="spacingAndGlyphs">data</text><path d="M706.5 166l2.5 3 2.5-3" fill="none" stroke="#333" stroke-width="1.2"/>
<text class="r" x="733" y="151.5" textLength="48" lengthAdjust="spacingAndGlyphs">Refresh</text>
<text class="gl" x="700.5" y="196.5" textLength="41.5" lengthAdjust="spacingAndGlyphs">Queries</text>

<!-- Insert -->
<rect x="814" y="109" width="10" height="21" fill="#5ea8e4" stroke="#2f7fbd"/><rect x="824" y="96" width="11" height="34" fill="#fff" stroke="#605e5c" stroke-width="1.3"/><rect x="835" y="102" width="10" height="28" fill="#c8c8c8" stroke="#888"/>
<path d="M840 115v17M831 123.5h18" stroke="#4d9a57" stroke-width="1.8"/>
<rect x="863" y="99" width="34" height="29" fill="#fff" stroke="#555" stroke-width="1.2"/><g fill="#4a90c8"><rect x="861" y="97" width="4" height="4"/><rect x="895" y="97" width="4" height="4"/><rect x="861" y="126" width="4" height="4"/><rect x="895" y="126" width="4" height="4"/></g>
<text x="872" y="120" font-size="19" fill="#3a87c4">A</text>
<path class="s" d="M919 130v-20h10V96h10v12h9v22zM929 110v20M939 108v22"/><path d="M955 108l2.5 3-15 20-7 3 1-7z" fill="#a9d2f2" stroke="#2f7fbd" stroke-width="1.2"/>
<text class="r" x="815" y="151.5" textLength="30" lengthAdjust="spacingAndGlyphs">New</text><text class="r" x="811" y="172" textLength="37" lengthAdjust="spacingAndGlyphs">visual</text>
<text class="r" x="867" y="151.5" textLength="26" lengthAdjust="spacingAndGlyphs">Text</text><text class="r" x="867" y="172" textLength="25" lengthAdjust="spacingAndGlyphs">box</text>
<text class="r" x="918" y="151.5" textLength="35.5" lengthAdjust="spacingAndGlyphs">More</text><text class="r" x="907" y="172" textLength="43" lengthAdjust="spacingAndGlyphs">visuals</text><path d="M954.5 166l2.5 3 2.5-3" fill="none" stroke="#333" stroke-width="1.2"/>
<text class="gl" x="871" y="196.5" textLength="30" lengthAdjust="spacingAndGlyphs">Insert</text>

<!-- Calculations -->
<rect x="1018" y="108" width="10" height="22" fill="#ebebeb" stroke="#d4d3d2"/><rect x="1028" y="96" width="10" height="34" fill="#fafafa" stroke="#d4d3d2"/><rect x="1038" y="102" width="9" height="14" fill="#e0e9f2" stroke="#d4d3d2"/>
<text x="1034" y="130" font-size="19" font-style="italic" fill="#c8c8c8" style="font-family:'Liberation Serif',serif">fx</text>
<text class="d" x="998" y="151.5" textLength="71" lengthAdjust="spacingAndGlyphs">New visual</text><text class="d" x="991" y="172" textLength="71" lengthAdjust="spacingAndGlyphs">calculation</text><path d="M1065.5 166l2.5 3 2.5-3" fill="none" stroke="#c0bfbe" stroke-width="1.2"/>
<rect x="1096" y="96" width="24" height="34" fill="#fff" stroke="#605e5c" stroke-width="1.5"/><rect x="1100" y="100" width="16" height="6" fill="#72aee0" stroke="#2f7fbd"/>
<g fill="#4b4a48"><rect x="1100" y="110" width="3.5" height="3.5"/><rect x="1106" y="110" width="3.5" height="3.5"/><rect x="1112" y="110" width="3.5" height="3.5"/><rect x="1100" y="116" width="3.5" height="3.5"/><rect x="1106" y="116" width="3.5" height="3.5"/><rect x="1112" y="116" width="3.5" height="3.5"/><rect x="1100" y="122" width="3.5" height="3.5"/><rect x="1106" y="122" width="3.5" height="3.5"/><rect x="1112" y="122" width="3.5" height="3.5"/>
<rect x="1161" y="110" width="3.5" height="3.5"/><rect x="1167" y="110" width="3.5" height="3.5"/><rect x="1173" y="110" width="3.5" height="3.5"/><rect x="1161" y="116" width="3.5" height="3.5"/><rect x="1167" y="116" width="3.5" height="3.5"/><rect x="1173" y="116" width="3.5" height="3.5"/><rect x="1161" y="122" width="3.5" height="3.5"/><rect x="1167" y="122" width="3.5" height="3.5"/><rect x="1173" y="122" width="3.5" height="3.5"/></g>
<rect x="1157.5" y="96" width="24" height="34" fill="none" stroke="#605e5c" stroke-width="1.5"/><rect x="1161" y="100" width="17" height="6" fill="#bbb"/>
<path d="M1158 93l-8 14h6l-4 11 14-17h-7l5-8z" fill="#f5b13a" stroke="#c97a15"/>
<text class="r" x="1095" y="151.5" textLength="29" lengthAdjust="spacingAndGlyphs">New</text><text class="r" x="1081" y="172" textLength="56" lengthAdjust="spacingAndGlyphs">measure</text>
<text class="r" x="1151" y="151.5" textLength="38" lengthAdjust="spacingAndGlyphs">Quick</text><text class="r" x="1142" y="172" textLength="56" lengthAdjust="spacingAndGlyphs">measure</text>
<text class="gl" x="1062" y="196.5" textLength="65" lengthAdjust="spacingAndGlyphs">Calculations</text>

<!-- Sensitivity -->
<path d="M1243 96h24v34h-24z" fill="#eef4f9" stroke="#c9deee" stroke-width="1.5"/><path d="M1250 115l15-13 7 6-15 14z" fill="#d4e4f1"/><path d="M1262 100l8-6 7 6-8 6z" fill="#d4e4f1"/>
<text class="d" x="1223" y="151.5" textLength="67" lengthAdjust="spacingAndGlyphs">Sensitivity</text><path d="M1253.5 166l2.5 3 2.5-3" fill="none" stroke="#c0bfbe" stroke-width="1.2"/>
<text class="gl" x="1229.5" y="196.5" textLength="55.5" lengthAdjust="spacingAndGlyphs">Sensitivity</text>
<!-- Share -->
<path class="s" d="M1325 130v-13c0-2 1-3 3-3h8V100c0-2 1-4 3-4h6c2 0 4 2 4 4v10M1336 114v16M1325 130h21" style="stroke:#3b3a39"/>
<path d="M1351 134v-22M1344 120l7-8 7 8" fill="none" stroke="#2f7fbd" stroke-width="1.7"/>
<text class="r" x="1316" y="151.5" textLength="47" lengthAdjust="spacingAndGlyphs">Publish</text>
<text class="gl" x="1324" y="196.5" textLength="31" lengthAdjust="spacingAndGlyphs">Share</text>
<!-- Copilot -->
<rect x="1418.5" y="102" width="27" height="11" fill="#fff" stroke="#605e5c" stroke-width="1.3"/><rect x="1418.5" y="115" width="27" height="11" fill="#fff" stroke="#605e5c" stroke-width="1.3"/><rect x="1422" y="105" width="5" height="5" fill="#3b3a39"/><rect x="1436" y="118" width="5" height="5" fill="#3b3a39"/>
<path d="M1438 96l2.5 6 6 2.5-6 2.5-2.500 6-2.500-6-6-2.500 6-2.500z" fill="#fff" stroke="#3a8fd0"/>
<path d="M1445.5 104l1.3 2.5 2.5 1.3-2.5 1.3-1.3 2.500-1.300-2.500-2.500-1.300 2.500-1.300z" fill="#fff" stroke="#3a8fd0" stroke-width=".8"/>
<path d="M1508 97h-8c-5 0-7 3-8 7l-5 15c-1 5 2 9 7 9h4c3 0 5-2 6-5l7-22c.5-2-1-4-3-4z" fill="url(#co1)"/>
<path d="M1501 130h8c5 0 7-3 8-7l5-15c1-5-2-9-7-9h-4c-3 0-5 2-6 5l-7 22c-.5 2 1 4 3 4z" fill="url(#co2)"/>
<path d="M1508 108l-5 11c-1 2 0 3 1 2l5-11c1-2 0-4-1-2z" fill="#f6e8ff"/>
<text class="r" x="1389" y="151.5" textLength="87" lengthAdjust="spacingAndGlyphs">Prep data for</text><text class="r" x="1425" y="172" textLength="14" lengthAdjust="spacingAndGlyphs">AI</text>
<text class="r" x="1480" y="151.5" textLength="47.5" lengthAdjust="spacingAndGlyphs">Copilot</text>
<text class="gl" x="1439" y="196.5" textLength="39" lengthAdjust="spacingAndGlyphs">Copilot</text>
<path d="M1903 192l5-5 5 5" fill="none" stroke="#333" stroke-width="1.5"/>

<!-- Taskbar -->
<rect x="0" y="1019" width="1919" height="60" fill="url(#tbg)"/>
<g fill="#33504a" opacity=".25"><ellipse cx="1540" cy="1040" rx="40" ry="18"/><ellipse cx="1580" cy="1062" rx="50" ry="14"/><ellipse cx="1660" cy="1068" rx="40" ry="8"/><ellipse cx="1330" cy="1030" rx="30" ry="8"/></g>
<!-- weather -->
<circle cx="41" cy="1050" r="13.5" fill="#f08a24"/><path d="M36 1062c-3 0-5-2-5-4s2-4 4-4c1-3 3-4 6-4s6 2 6 5c3 0 6 1 6 4s-2 3-5 3z" fill="#dbe7f2"/>
<circle cx="49" cy="1038" r="9" fill="#c4261d"/><text x="49" y="1043" font-size="12" fill="#fff" text-anchor="middle">3</text>
<!-- windows -->
<rect x="395" y="1037" width="14" height="13.5" rx="1" fill="url(#win)"/><rect x="410" y="1037" width="14" height="13.5" rx="1" fill="url(#win)"/><rect x="395" y="1051.5" width="14" height="13.5" rx="1" fill="url(#win)"/><rect x="410" y="1051.5" width="14" height="13.5" rx="1" fill="url(#win)"/>
<circle cx="464" cy="1049" r="9.5" fill="#15262c" stroke="#dfe6e8" stroke-width="3"/><path d="M470 1057l8 7.5" stroke="#dfe6e8" stroke-width="3"/>
<rect x="505" y="1045" width="20" height="19" rx="2" fill="#787878"/><rect x="517" y="1037" width="19" height="20" rx="2" fill="#f2f2f2"/><rect x="517" y="1045" width="8" height="12" fill="#b8b8b8"/>
<path d="M574 1036h-5c-4 0-5 2-6 6l-1 11c0 5 2 8 6 8 3 0 5-2 6-5l4-17c.5-2 0-3-4-3z" fill="url(#co1)"/><path d="M578 1066h5c4 0 6-3 7-6l1-12c0-4-2-7-6-7-3 0-5 2-6 5l-4 17c-.5 2 0 3 3 3z" fill="url(#co2)"/>
<circle cx="631" cy="1051" r="14.5" fill="#0a6cc2" stroke="#fff" stroke-width="1.2"/><text x="631" y="1058" font-size="19" font-style="italic" font-weight="bold" fill="#fff" text-anchor="middle">hp</text>
<circle cx="686" cy="1051" r="13.5" fill="#1798cf" stroke="#fff" stroke-width="1"/><text x="686" y="1059" font-size="20" font-weight="bold" fill="#fff" text-anchor="middle">?</text><circle cx="697" cy="1039" r="9.5" fill="#f5c024"/>
<path d="M727.5 1040l7-3 6 3 6-3 7.5 3v16l-13.5 11-13.5-11z" fill="#c8202b"/><path d="M734 1044l7 3 6-3v10l-6 4-7-4z" fill="#15262c"/>
<rect x="782" y="1035" width="29" height="30" fill="#fff"/><text x="784" y="1044" font-size="8" font-weight="bold" fill="#d94a2a" textLength="25">TIN</text><text x="784" y="1053" font-size="8" font-weight="bold" fill="#5aa63c" textLength="25">KER</text><text x="784" y="1062" font-size="8" font-weight="bold" fill="#2b7ab8" textLength="25">CAD</text>
<rect x="836" y="1035" width="30" height="30" rx="2" fill="#00879b"/><path d="M842 1050c2-5 7-5 9 0s7 5 9 0-7-5-9 0-7 5-9 0z" fill="none" stroke="#fff" stroke-width="1.6"/>
<path d="M894 1045l8-3 8 8 8-10 4 2v22l-4 2-8-10-8 8-8-3z" fill="#7b4bb5"/>
<rect x="960" y="1040" width="15" height="25" fill="#16a2c7"/><text x="960" y="1064" font-size="23" font-weight="bold" fill="#8bbd2e">R</text>
<rect x="1001" y="1043" width="29" height="25" rx="2" fill="#f4f4f4"/><path d="M1009 1043c0-10 13-10 13 0" fill="none" stroke="#2a9bd8" stroke-width="2"/><rect x="1010" y="1049" width="5" height="5" fill="#e74b2a"/><rect x="1016" y="1049" width="5" height="5" fill="#7fba00"/><rect x="1010" y="1055" width="5" height="5" fill="#00a4ef"/><rect x="1016" y="1055" width="5" height="5" fill="#ffb900"/>
<rect x="1057" y="1040" width="28.5" height="21" rx="5" fill="#e8112d"/><path d="M1068 1045l8 5.5-8 5.5z" fill="#fff"/>
<circle cx="1126" cy="1051" r="15" fill="#e0382e"/><path d="M1126 1051L1139 1058.5A15 15 0 0 1 1121 1065z" fill="#f7c31a"/><path d="M1126 1051L1121 1065A15 15 0 0 1 1113 1058.5z" fill="#2b9f48"/><path d="M1113 1058.5A15 15 0 0 1 1113 1043.5L1126 1051z" fill="#2b9f48"/><circle cx="1126" cy="1051" r="7" fill="#fff"/><circle cx="1126" cy="1051" r="5.2" fill="#2f7de0"/>
<rect x="1175" y="1037" width="21" height="28" rx="1.5" fill="#21a366"/><rect x="1175" y="1051" width="21" height="14" fill="#107c41"/><rect x="1166" y="1044" width="15" height="15" rx="1" fill="#185c37"/><text x="1169.5" y="1056" font-size="11.5" font-weight="bold" fill="#fff">X</text>
<path d="M1244 1036l7 4v22l-7 4-14-12-6 4-3-2v-14l3-2 6 4zM1244 1044l-8 7 8 7z" fill="#1b8fdc" fill-rule="evenodd"/>
<path d="M1276.5 1041h12l4 4h14v19h-30z" fill="#f5c53c"/><rect x="1276.5" y="1050" width="30" height="14" fill="#fbdc66"/><rect x="1285" y="1057" width="14" height="5" fill="#2a86d4"/>
<circle cx="1352" cy="1044" r="4" fill="#7b83eb"/><circle cx="1358" cy="1048" r="2.8" fill="#5059c9"/><path d="M1346 1050h15v10c0 4-3 6-7 6s-8-2-8-6z" fill="#7b83eb"/><rect x="1332" y="1044" width="17" height="17" rx="1.5" fill="#4b53bc"/><text x="1340.5" y="1057" font-size="12" font-weight="bold" fill="#fff" text-anchor="middle">T</text>
<circle cx="1401" cy="1051" r="12" fill="none" stroke="#2ad266" stroke-width="3"/><path d="M1388 1065l3-8 5 5z" fill="#2ad266"/><path d="M1396 1046c1 5 4 8 9 10" fill="none" stroke="#2ad266" stroke-width="3"/>
<rect x="1396" y="1029" width="32" height="20" rx="8" fill="#3fb9ec"/><text x="1412" y="1044" font-size="13" fill="#111" text-anchor="middle">99+</text>
<rect x="1433.5" y="1026" width="47" height="49" rx="4" fill="#2a3a3e" fill-opacity=".55" stroke="#3c4a4c"/>
<rect x="1444" y="1049" width="8" height="16" rx="1" fill="#f6d23c"/><rect x="1452" y="1041" width="8" height="24" rx="1" fill="#f2c811"/><rect x="1460" y="1035" width="8" height="30" rx="1" fill="#d6a50d"/>
<rect x="1447" y="1071" width="19" height="3" rx="1.5" fill="#5cc6f5"/>
<circle cx="1511.5" cy="1051" r="14.5" fill="url(#edge)"/><path d="M1502 1051c2-7 13-10 18-3 2 3 1 6-3 7-5 1-9-1-15-4z" fill="#0e3f8a" opacity=".6"/><path d="M1511 1056c3 4 9 4 13 1-3 6-9 9-14 7-3-2-3-5 1-8z" fill="#7fe0c0"/>
<g fill="#8a9192"><circle cx="1181" cy="1072" r="2"/><circle cx="1291" cy="1072" r="2"/><circle cx="1346" cy="1072" r="2"/><circle cx="1401.5" cy="1072" r="2"/><circle cx="1511" cy="1072" r="2"/></g>
<path d="M1635 1054l6.5-6.5 6.5 6.5" fill="none" stroke="#fff" stroke-width="1.5"/>
<text x="1675" y="1056" font-size="14.5" fill="#fff" textLength="29" lengthAdjust="spacingAndGlyphs">ENG</text>
<g fill="none" stroke="#fff" stroke-width="1.4"><path d="M1727 1045a14 14 0 0 1 19 0M1730 1049a9.5 9.5 0 0 1 13 0M1733 1053a5 5 0 0 1 7 0"/><path d="M1760 1047v8h4l5 5v-18l-5 5zM1772 1047c2 2 2 6 0 8M1775 1044c3 4 3 10 0 14"/><rect x="1788" y="1045" width="17" height="12" rx="2.5"/></g>
<rect x="1790" y="1047" width="9" height="8" fill="#fff"/><circle cx="1736.5" cy="1057" r="1.3" fill="#fff"/><rect x="1806" y="1049" width="1.5" height="4" fill="#fff"/>
<text x="1842.4" y="1045" font-size="14.5" fill="#fff" textLength="54.6" lengthAdjust="spacingAndGlyphs">6:03 PM</text>
<text x="1828" y="1065" font-size="14.5" fill="#fff" textLength="69" lengthAdjust="spacingAndGlyphs">9/11/2025</text>

<!-- Watermark -->
<text x="1065" y="1024" font-size="72" font-weight="bold" fill="#d2d2d2" fill-opacity=".8" text-anchor="start" direction="rtl" style="font-family:'DejaVu Sans',sans-serif">نفذلي</text>
<g fill="#bdbdbd" fill-opacity=".85"><circle cx="872" cy="1036" r="5"/><circle cx="884" cy="1036" r="5"/></g>
<text x="861" y="1070" font-size="37" fill="#d4d4d4" fill-opacity=".85" stroke="#d4d4d4" stroke-opacity=".6" stroke-width=".6" textLength="199" lengthAdjust="spacingAndGlyphs">nafezly.com</text>
</svg>
</body></html>
